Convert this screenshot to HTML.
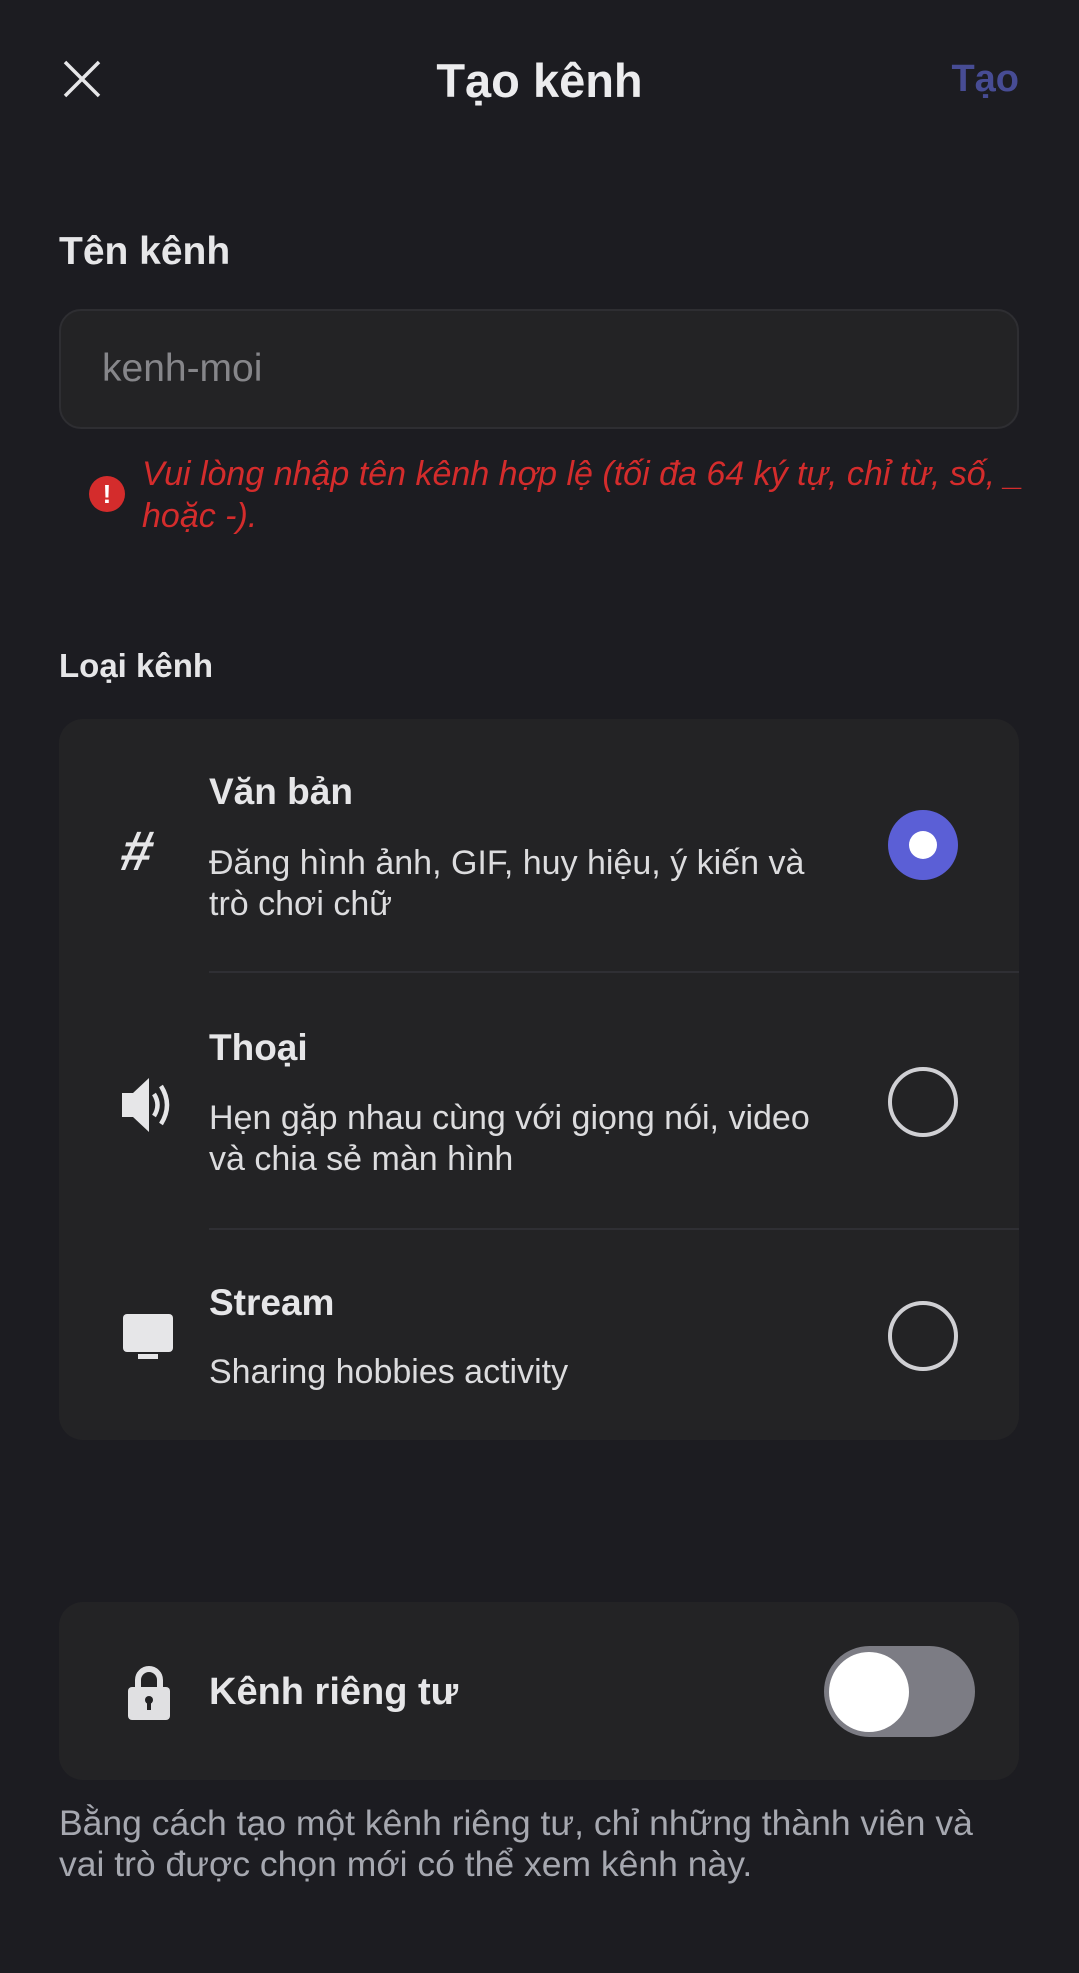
<!DOCTYPE html>
<html><head><meta charset="utf-8"><style>
*{margin:0;padding:0;box-sizing:border-box}
body{width:1079px;height:1973px;background:#1c1c21;font-family:"Liberation Sans","DejaVu Sans",sans-serif;color:#e6e6e8;position:relative;overflow:hidden}
.a{position:absolute;white-space:nowrap}
.t{font-weight:bold}
.radio{position:absolute;width:70px;height:70px;border-radius:50%;border:4px solid #d0d0d4}
</style></head><body>
<svg class="a" style="left:62px;top:59px" width="40" height="40" viewBox="0 0 40 40"><path d="M3 3L37 37M37 3L3 37" stroke="#e6e6e8" stroke-width="3.5"/></svg>
<div class="a t" style="left:0;width:1079px;text-align:center;top:53px;font-size:47px;color:#ececee">Tạo kênh</div>
<div class="a t" style="right:60px;top:58px;font-size:38px;color:#474c94">Tạo</div>

<div class="a t" style="left:59px;top:230px;font-size:39px;color:#e6e6e8">Tên kênh</div>
<div class="a" style="left:59px;top:309px;width:960px;height:120px;border-radius:22px;background:#232325;border:2px solid #2e2e32"></div>
<div class="a" style="left:102px;top:347px;font-size:39px;color:#86868a">kenh-moi</div>
<div class="a" style="left:89px;top:476px;width:36px;height:36px;border-radius:50%;background:#d42c2c;color:#fff;text-align:center;font-weight:bold;font-size:26px;line-height:36px">!</div>
<div class="a" style="left:142px;top:453px;font-size:34px;font-style:italic;color:#d42c2c;line-height:42px">Vui lòng nhập tên kênh hợp lệ (tối đa 64 ký tự, chỉ từ, số, _<br>hoặc -).</div>

<div class="a t" style="left:59px;top:647px;font-size:33px">Loại kênh</div>
<div class="a" style="left:59px;top:719px;width:960px;height:721px;border-radius:24px;background:#232325"></div>
<div class="a" style="left:209px;top:971px;width:810px;height:2px;background:#2f2f34"></div>
<div class="a" style="left:209px;top:1228px;width:810px;height:2px;background:#2f2f34"></div>

<div class="a t" style="left:122px;top:818px;font-size:56px;color:#e6e6e8;transform:skewX(-12deg)">#</div>
<div class="a t" style="left:209px;top:771px;font-size:37px">Văn bản</div>
<div class="a" style="left:209px;top:843px;font-size:34px;line-height:41px;color:#dcdcde">Đăng hình ảnh, GIF, huy hiệu, ý kiến và<br>trò chơi chữ</div>
<div class="a" style="left:888px;top:810px;width:70px;height:70px;border-radius:50%;background:#5b5fd6"></div>
<div class="a" style="left:909px;top:831px;width:28px;height:28px;border-radius:50%;background:#fff"></div>

<svg class="a" style="left:120px;top:1076px" width="58" height="58" viewBox="0 0 58 58"><path d="M2 17H13L29 2V56L13 41H2Z" fill="#e6e6e8"/><path d="M34 18Q41 29 34 40" stroke="#e6e6e8" stroke-width="4.5" fill="none"/><path d="M41 10Q53 29 41 48" stroke="#e6e6e8" stroke-width="4.5" fill="none"/></svg>
<div class="a t" style="left:209px;top:1027px;font-size:37px">Thoại</div>
<div class="a" style="left:209px;top:1098px;font-size:34px;line-height:41px;color:#dcdcde">Hẹn gặp nhau cùng với giọng nói, video<br>và chia sẻ màn hình</div>
<div class="radio" style="left:888px;top:1067px"></div>

<svg class="a" style="left:122px;top:1313px" width="52" height="48" viewBox="0 0 52 48"><rect x="1" y="1" width="50" height="38" rx="4" fill="#e6e6e8"/><rect x="16" y="41" width="20" height="5" fill="#e6e6e8"/></svg>
<div class="a t" style="left:209px;top:1282px;font-size:37px">Stream</div>
<div class="a" style="left:209px;top:1353px;font-size:34px;color:#dcdcde">Sharing hobbies activity</div>
<div class="radio" style="left:888px;top:1301px"></div>

<div class="a" style="left:59px;top:1602px;width:960px;height:178px;border-radius:24px;background:#232325"></div>
<svg class="a" style="left:126px;top:1665px" width="46" height="56" viewBox="0 0 46 56"><path d="M12 24V15A11 11 0 0 1 34 15V24" stroke="#e0e0e2" stroke-width="6" fill="none"/><rect x="2" y="22" width="42" height="33" rx="4" fill="#e0e0e2"/><circle cx="23" cy="35" r="4" fill="#232325"/><rect x="21" y="36" width="4" height="9" fill="#232325"/></svg>
<div class="a t" style="left:209px;top:1671px;font-size:38px">Kênh riêng tư</div>
<div class="a" style="left:824px;top:1646px;width:151px;height:91px;border-radius:46px;background:#7c7c84"></div>
<div class="a" style="left:829px;top:1652px;width:80px;height:80px;border-radius:50%;background:#fff"></div>

<div class="a" style="left:59px;top:1803px;font-size:35.5px;line-height:41px;color:#a6a8b0">Bằng cách tạo một kênh riêng tư, chỉ những thành viên và<br>vai trò được chọn mới có thể xem kênh này.</div>
</body></html>
